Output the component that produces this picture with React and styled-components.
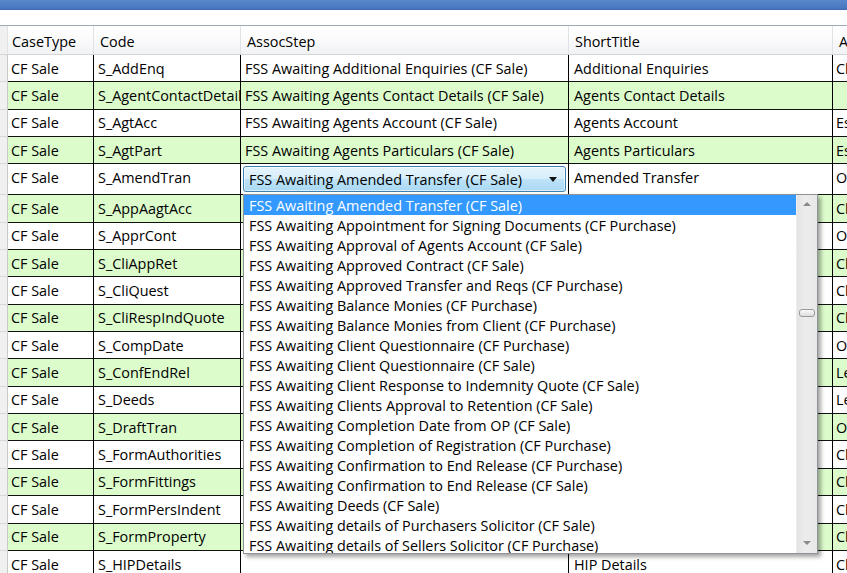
import React from "react";
import styled, { createGlobalStyle } from "styled-components";

const Global = createGlobalStyle`
  html, body { margin: 0; padding: 0; background: #fff; overflow: hidden; }
  body { font-family: "Open Sans", "Noto Sans", sans-serif; font-size: 14.4px; color: #000; }
  #root { width: 847px; height: 573px; overflow: hidden; }
`;

const COLS = "8px 86px 147px 328px 264px 200px";
const ROW_H = 27.35;

const Window = styled.div`
  width: 847px;
  height: 573px;
  display: flex;
  flex-direction: column;
  overflow: hidden;
`;

const TitleBar = styled.div`
  height: 10px;
  flex: none;
  background: linear-gradient(#5a88cc, #4a78c0 80%, #3d68ae);
`;

const ToolStrip = styled.div`
  height: 15px;
  flex: none;
  background: #fff;
  border-bottom: 1px solid #9eaabb;
`;

const GridArea = styled.div`
  position: relative;
  flex: 1;
  overflow: hidden;
`;

const HeaderRow = styled.div`
  display: grid;
  grid-template-columns: ${COLS};
  height: 29px;
  border-bottom: 1px solid #d5d5d5;
  box-sizing: border-box;
`;

const HeaderCell = styled.div`
  display: flex;
  align-items: center;
  padding: 2px 0 0 ${(p) => (p.$first ? 4 : 6)}px;
  background: ${(p) =>
    p.$corner ? "#f0f0f0" : "linear-gradient(#ffffff 0%, #fbfbfc 45%, #f1f2f4 100%)"};
  border-right: 1px solid #e0e2e5;
  white-space: nowrap;
  overflow: hidden;
`;

const Row = styled.div`
  display: grid;
  grid-template-columns: ${COLS};
  height: ${(p) => p.$h}px;
`;

const RowHead = styled.div`
  background: #f0f0f0;
  border-bottom: 1px solid #d8d8d8;
  border-right: 1px solid #c8c8c8;
  box-sizing: border-box;
`;

const Cell = styled.div`
  box-sizing: border-box;
  background: ${(p) => (p.$alt ? "#dcfccc" : "#fff")};
  border-right: 1px solid #000;
  border-bottom: 1px solid #111;
  padding: ${(p) => (p.$top ? "4px" : "0")} 0 0 ${(p) => p.$pl}px;
  display: flex;
  align-items: ${(p) => (p.$top ? "flex-start" : "center")};
  white-space: nowrap;
  overflow: hidden;
`;

const EditCell = styled.div`
  box-sizing: border-box;
  background: #fff;
  border-right: 1px solid #000;
  border-bottom: 1px solid #111;
  padding: 2px;
  display: flex;
`;

const Combo = styled.div`
  flex: 1;
  display: flex;
  align-items: center;
  justify-content: space-between;
  padding: 0 8px 0 5px;
  border: 1px solid #3c7fb1;
  border-radius: 3px;
  background: linear-gradient(#e6f4fc 0%, #d6eefb 48%, #bde3f9 52%, #a9d8f4 100%);
  box-shadow: inset 0 0 0 1px rgba(255, 255, 255, 0.6);
  white-space: nowrap;
  overflow: hidden;
`;

const Arrow = styled.span`
  flex: none;
  width: 0;
  height: 0;
  border-left: 4px solid transparent;
  border-right: 4px solid transparent;
  border-top: 5px solid #111;
`;

const DropList = styled.div`
  position: absolute;
  left: 243px;
  top: 168px;
  width: 575px;
  height: 360px;
  box-sizing: border-box;
  border: 1px solid #8e9299;
  background: #fff;
  box-shadow: 3px 3px 4px rgba(0, 0, 0, 0.35);
  display: flex;
  overflow: hidden;
`;

const Items = styled.div`
  flex: 1;
  overflow: hidden;
`;

const Item = styled.div`
  height: 20px;
  display: flex;
  align-items: center;
  padding-left: 5px;
  white-space: nowrap;
  background: ${(p) => (p.$sel ? "#3399ff" : "transparent")};
  color: ${(p) => (p.$sel ? "#fff" : "#000")};
`;

const ScrollBar = styled.div`
  width: 21px;
  flex: none;
  display: flex;
  flex-direction: column;
  align-items: center;
  justify-content: space-between;
  background: linear-gradient(90deg, #e3e3e3, #ececec 40%, #e8e8e8);
  border-left: 1px solid #eeeeee;
  padding: 7px 0 8px;
  box-sizing: border-box;
  position: relative;
`;

const ArrowUp = styled.span`
  width: 0;
  height: 0;
  border-left: 4px solid transparent;
  border-right: 4px solid transparent;
  border-bottom: 4px solid #8a8a8a;
`;

const ArrowDown = styled.span`
  width: 0;
  height: 0;
  border-left: 4px solid transparent;
  border-right: 4px solid transparent;
  border-top: 4px solid #8a8a8a;
`;

const Thumb = styled.div`
  position: absolute;
  left: 2px;
  right: 2px;
  top: 114px;
  height: 8px;
  border: 1px solid #9a9a9a;
  border-radius: 3px;
  background: linear-gradient(#fafafa, #dcdcdc);
  box-sizing: border-box;
`;

/* AssocStep / ShortTitle of rows lying under the open list are not visible */
const rows = [
  ["S_AddEnq", "FSS Awaiting Additional Enquiries (CF Sale)", "Additional Enquiries", "Client"],
  ["S_AgentContactDetails", "FSS Awaiting Agents Contact Details (CF Sale)", "Agents Contact Details", ""],
  ["S_AgtAcc", "FSS Awaiting Agents Account (CF Sale)", "Agents Account", "Estate Agent"],
  ["S_AgtPart", "FSS Awaiting Agents Particulars (CF Sale)", "Agents Particulars", "Estate Agent"],
  ["S_AmendTran", "EDIT", "Amended Transfer", "Other"],
  ["S_AppAagtAcc", "", "", "Client"],
  ["S_ApprCont", "", "", "Other"],
  ["S_CliAppRet", "", "", "Client"],
  ["S_CliQuest", "", "", "Client"],
  ["S_CliRespIndQuote", "", "", "Client"],
  ["S_CompDate", "", "", "Other"],
  ["S_ConfEndRel", "", "", "Lender"],
  ["S_Deeds", "", "", "Lender"],
  ["S_DraftTran", "", "", "Other"],
  ["S_FormAuthorities", "", "", "Client"],
  ["S_FormFittings", "", "", "Client"],
  ["S_FormPersIndent", "", "", "Client"],
  ["S_FormProperty", "", "", "Client"],
  ["S_HIPDetails", "", "HIP Details", "Client"],
];

const options = [
  "FSS Awaiting Amended Transfer (CF Sale)",
  "FSS Awaiting Appointment for Signing Documents (CF Purchase)",
  "FSS Awaiting Approval of Agents Account (CF Sale)",
  "FSS Awaiting Approved Contract (CF Sale)",
  "FSS Awaiting Approved Transfer and Reqs (CF Purchase)",
  "FSS Awaiting Balance Monies (CF Purchase)",
  "FSS Awaiting Balance Monies from Client (CF Purchase)",
  "FSS Awaiting Client Questionnaire (CF Purchase)",
  "FSS Awaiting Client Questionnaire (CF Sale)",
  "FSS Awaiting Client Response to Indemnity Quote (CF Sale)",
  "FSS Awaiting Clients Approval to Retention (CF Sale)",
  "FSS Awaiting Completion Date from OP (CF Sale)",
  "FSS Awaiting Completion of Registration (CF Purchase)",
  "FSS Awaiting Confirmation to End Release (CF Purchase)",
  "FSS Awaiting Confirmation to End Release (CF Sale)",
  "FSS Awaiting Deeds (CF Sale)",
  "FSS Awaiting details of Purchasers Solicitor (CF Sale)",
  "FSS Awaiting details of Sellers Solicitor (CF Purchase)",
];

export default function App() {
  return (
    <>
      <Global />
      <Window>
        <TitleBar />
        <ToolStrip />
        <GridArea>
          <HeaderRow>
            <HeaderCell $corner />
            <HeaderCell $first>CaseType</HeaderCell>
            <HeaderCell>Code</HeaderCell>
            <HeaderCell>AssocStep</HeaderCell>
            <HeaderCell>ShortTitle</HeaderCell>
            <HeaderCell>AddressedTo</HeaderCell>
          </HeaderRow>
          {rows.map(([code, step, title, to], i) => {
            const alt = i % 2 === 1;
            const edit = step === "EDIT";
            return (
              <Row key={code} $h={edit ? 31 : ROW_H}>
                <RowHead />
                <Cell $alt={alt} $pl={3} $top={edit}>CF Sale</Cell>
                <Cell $alt={alt} $pl={4} $top={edit}>{code}</Cell>
                {edit ? (
                  <EditCell>
                    <Combo>
                      <span>FSS Awaiting Amended Transfer (CF Sale)</span>
                      <Arrow />
                    </Combo>
                  </EditCell>
                ) : (
                  <Cell $alt={alt} $pl={4}>{step}</Cell>
                )}
                <Cell $alt={alt} $pl={5} $top={edit}>{title}</Cell>
                <Cell $alt={alt} $pl={3} $top={edit}>{to}</Cell>
              </Row>
            );
          })}
          <DropList>
            <Items>
              {options.map((o, i) => (
                <Item key={o} $sel={i === 0}>{o}</Item>
              ))}
            </Items>
            <ScrollBar>
              <ArrowUp />
              <Thumb />
              <ArrowDown />
            </ScrollBar>
          </DropList>
        </GridArea>
      </Window>
    </>
  );
}
